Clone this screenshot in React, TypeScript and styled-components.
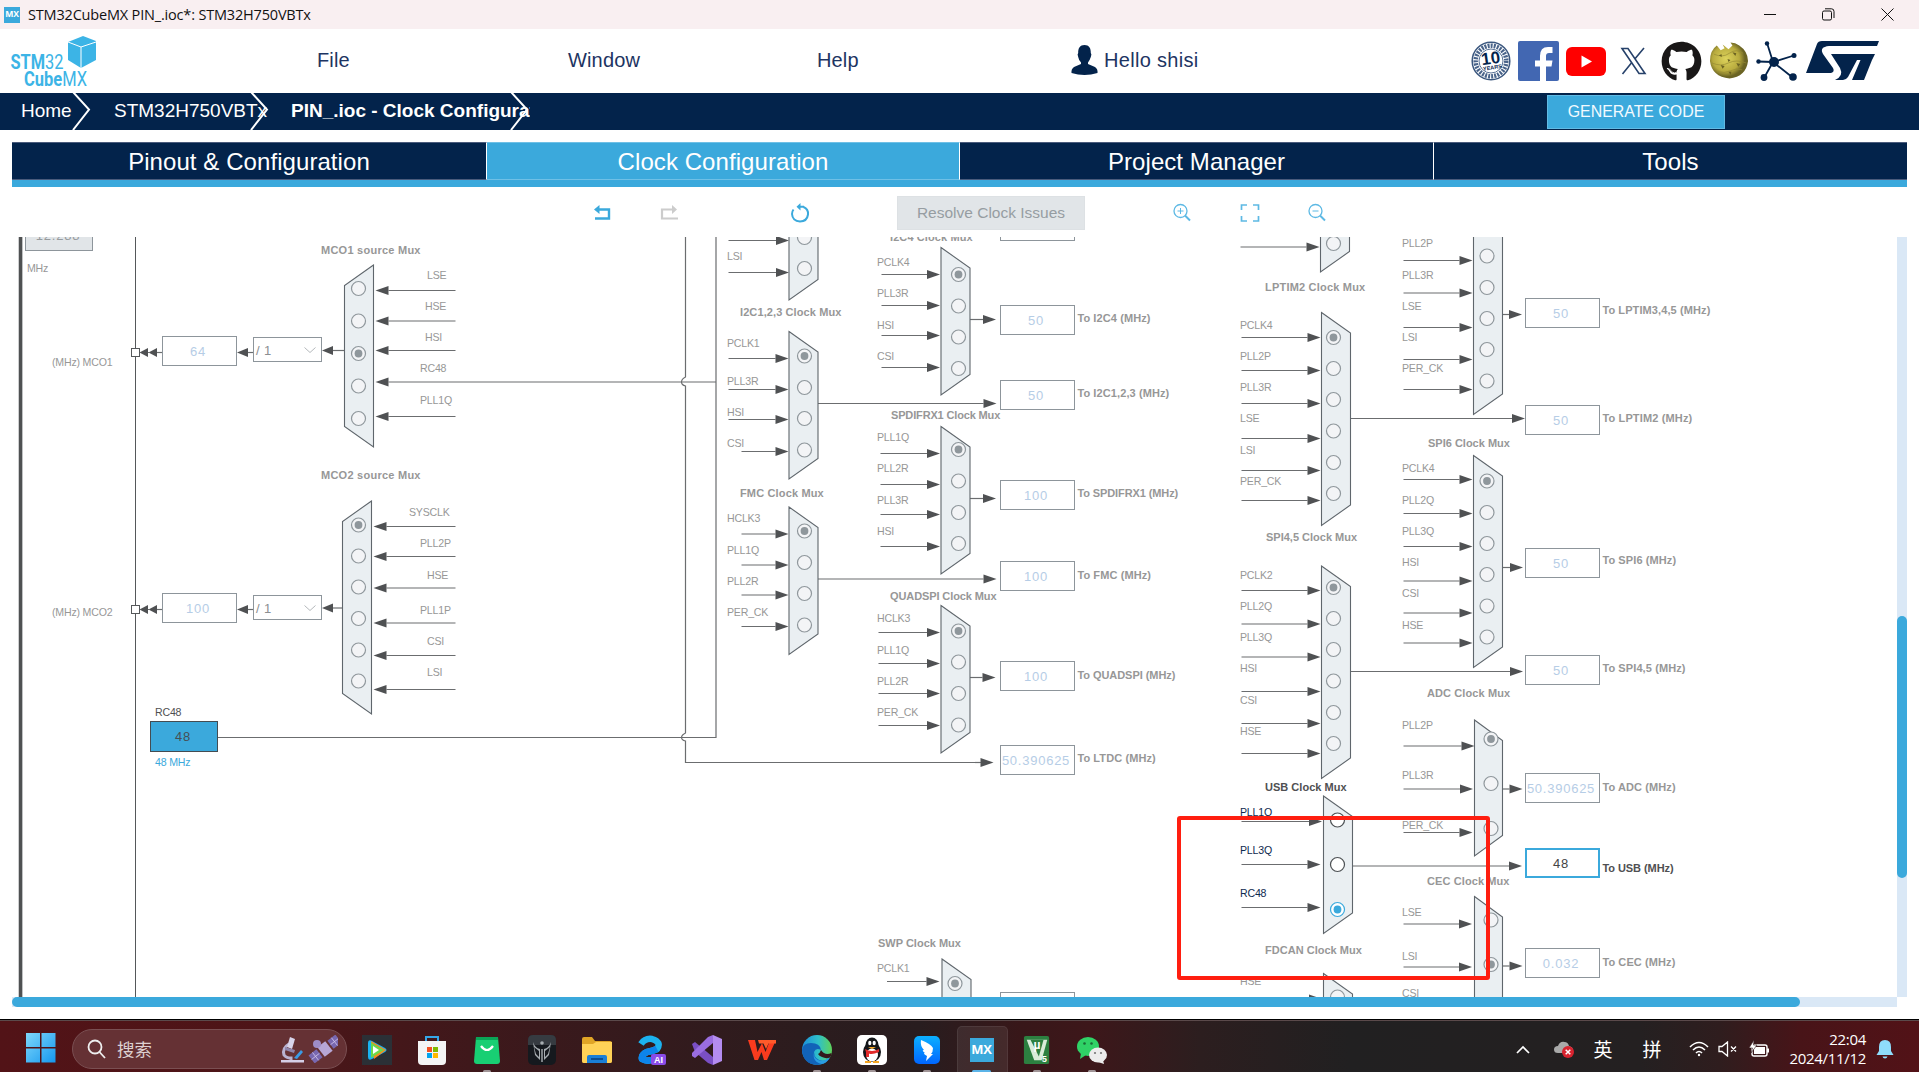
import React from 'react';
import styled, { createGlobalStyle } from 'styled-components';
import { FaGithub } from 'react-icons/fa';

const NAVY = '#03234b';
const SKY = '#3ba9dc';
const SANS = '"Liberation Sans", Arial, sans-serif';
const SYSTEM = '"Open Sans", "Noto Sans", "Noto Sans CJK SC", sans-serif';

const GlobalStyle = createGlobalStyle`
  * { box-sizing: border-box; }
  body { margin: 0; background: #fff; overflow: hidden; font-family: ${SANS}; }
`;

const Window = styled.div`
  width: 1919px;
  height: 1072px;
  display: flex;
  flex-direction: column;
  background: #fff;
  overflow: hidden;
`;

/* ---------- title bar ---------- */
const TitleBar = styled.div`
  height: 29px;
  flex: none;
  display: flex;
  align-items: center;
  padding: 0 25px 0 4px;
  background: #f9eff1;
`;
const AppBadge = styled.div<{ $size: number }>`
  width: ${p => p.$size}px;
  height: ${p => p.$size}px;
  display: flex;
  align-items: center;
  justify-content: center;
  background: ${SKY};
  color: #fff;
  font: bold ${p => p.$size * 0.54}px/1 "Open Sans", sans-serif;
  letter-spacing: -0.3px;
`;
const WindowTitle = styled.div`
  flex: 1;
  margin-left: 8px;
  font: 14.5px/20px ${SYSTEM};
  letter-spacing: -0.18px;
  color: #111;
`;
const WindowButtons = styled.div`
  display: flex;
  gap: 46px;
  align-items: center;
`;

/* ---------- header ---------- */
const Header = styled.header`
  height: 64px;
  flex: none;
  display: grid;
  grid-template-columns: 317px 251px 249px 254px 400px 1fr;
  align-items: center;
`;
const LogoCell = styled.div`
  height: 64px;
  padding: 5px 0 0 8px;
`;
const MenuItem = styled.div`
  font-size: 20px;
  line-height: 24px;
  padding-bottom: 3px;
  letter-spacing: 0.15px;
  color: #1d3462;
`;
const UserItem = styled(MenuItem)`
  display: flex;
  align-items: center;
  gap: 6px;
  padding-bottom: 2px;
  letter-spacing: 0.3px;
`;
const Links = styled.div`
  display: flex;
  align-items: center;
  gap: 7px;
`;
const LinkIcon = styled.div<{ $w?: number }>`
  width: ${p => p.$w ?? 41}px;
  height: 40px;
  display: flex;
  align-items: center;
  justify-content: center;
`;

/* ---------- breadcrumb ---------- */
const Crumbs = styled.nav`
  height: 37px;
  flex: none;
  display: flex;
  align-items: center;
  background: ${NAVY};
  color: #fff;
`;
const Crumb = styled.div<{ $w: number; $pad: number; $bold?: boolean }>`
  position: relative;
  width: ${p => p.$w}px;
  height: 37px;
  padding-left: ${p => p.$pad}px;
  overflow: hidden;
  white-space: nowrap;
  font-size: 19px;
  line-height: 36px;
  font-weight: ${p => (p.$bold ? 700 : 400)};
`;
const CrumbArrow = styled.svg<{ $x: number }>`
  position: absolute;
  left: ${p => p.$x}px;
  top: 0;
`;
const Generate = styled.button`
  width: 178px;
  height: 34px;
  margin-left: 1017px;
  padding: 1px 0 0;
  border: 1px solid #62bae3;
  background: ${SKY};
  color: #f2faff;
  font: 15.9px/20px ${SANS};
`;

/* ---------- tabs ---------- */
const Tabs = styled.div`
  height: 45px;
  flex: none;
  margin: 12px 12px 0;
  display: grid;
  grid-template-columns: 475px 473px 474px 1fr;
  border-bottom: 7px solid ${SKY};
`;
const Tab = styled.div<{ $active?: boolean }>`
  display: flex;
  align-items: center;
  justify-content: center;
  padding-top: 2px;
  background: ${p => (p.$active ? SKY : NAVY)};
  border: 1px solid ${p => (p.$active ? '#6fc0e6' : '#4a5b7c')};
  border-right-color: #fff;
  border-left-width: 0;
  color: #fff;
  font-size: 24px;
  letter-spacing: 0.07px;
  &:last-child { border-right-width: 0; }
`;

/* ---------- toolbar ---------- */
const Toolbar = styled.div`
  height: 50px;
  flex: none;
  display: flex;
  align-items: center;
  padding: 1px 0 0 592px;
`;
const Tool = styled.div<{ $gap: number }>`
  width: 20px;
  height: 20px;
  margin-right: ${p => p.$gap}px;
  svg { display: block; }
`;
const Resolve = styled.button`
  width: 188px;
  height: 34px;
  margin-right: 87px;
  padding: 1px 0 0;
  border: 1px solid #dde1e4;
  background: #e1e5e8;
  color: #969da2;
  font: 15.5px/20px ${SANS};
`;

/* ---------- diagram ---------- */
const Workspace = styled.main`
  height: 770px;
  flex: none;
  display: grid;
  grid-template: 760px 10px / 1885px 10px;
  padding-left: 12px;
`;
const Viewport = styled.div`
  position: relative;
  overflow: hidden;
`;
const Board = styled.div`
  position: absolute;
  left: -12px;
  top: -237px;
  width: 1919px;
  height: 1072px;
`;
const Drawing = styled.svg`
  position: absolute;
  left: 0;
  top: 0;
`;
const TONES = { dim: '#979797', dark: '#4f5052', navy: '#0e2a4f', sky: SKY };
type Tone = keyof typeof TONES;
const Pin = styled.span<{ $x: number; $base: number; $tone?: Tone }>`
  position: absolute;
  left: ${p => p.$x}px;
  top: ${p => p.$base - 10}px;
  white-space: nowrap;
  font-size: 10.6px;
  line-height: 12px;
  letter-spacing: -0.2px;
  color: ${p => TONES[p.$tone ?? 'dim']};
`;
const Caption = styled(Pin)<{ $track?: number }>`
  font-size: 11px;
  font-weight: 700;
  letter-spacing: ${p => p.$track ?? 0.1}px;
`;
const Field = styled.div<{ $x: number; $y: number; $on?: boolean }>`
  position: absolute;
  left: ${p => p.$x}px;
  top: ${p => p.$y}px;
  width: 75px;
  height: 30px;
  padding: 1px 3px 0 0;
  display: flex;
  align-items: center;
  justify-content: center;
  background: #fff;
  border: ${p => (p.$on ? `2px solid ${SKY}` : '1px solid #8d959b')};
  color: ${p => (p.$on ? '#444' : '#b6cde6')};
  font-size: 13px;
  line-height: 16px;
  letter-spacing: 0.75px;
`;
const Source = styled(Field)<{ $solid?: boolean }>`
  width: 68px;
  height: 31px;
  padding: 0 2px 0 0;
  background: ${p => (p.$solid ? SKY : '#e1e5e8')};
  border-color: ${p => (p.$solid ? '#444c52' : '#8d959b')};
  color: ${p => (p.$solid ? '#474f55' : '#979b9e')};
`;
const Divider = styled.div<{ $x: number; $y: number }>`
  position: absolute;
  left: ${p => p.$x}px;
  top: ${p => p.$y}px;
  width: 69px;
  height: 25px;
  display: flex;
  align-items: center;
  justify-content: space-between;
  padding: 1px 5px 0 2px;
  background: #fff;
  border: 1px solid #8d959b;
  color: #8b8f92;
  font-size: 13px;
  letter-spacing: 0.4px;
`;
const Marker = styled.div`
  position: absolute;
  left: 1177px;
  top: 816px;
  width: 313px;
  height: 164px;
  border: 4px solid #ff1e10;
  border-radius: 3px;
`;
const Track = styled.div`
  position: relative;
  background: #dae8f6;
`;
const VThumb = styled.div`
  margin-top: 379px;
  height: 262px;
  border-radius: 5px;
  background: ${SKY};
`;
const HThumb = styled.div`
  width: 1788px;
  height: 10px;
  border-radius: 5px;
  background: ${SKY};
`;

/* ---------- taskbar ---------- */
const Taskbar = styled.footer`
  height: 53px;
  flex: none;
  margin-top: 12px;
  display: flex;
  align-items: center;
  border-top: 1px solid #000;
  box-shadow: inset 0 1px 0 #5b4a4b;
  background: linear-gradient(90deg, #521317 0, #4d1518 270px, #3a191c 540px, #2c1c1e 800px, #281d1f 920px,
    #381719 1020px, #3d171a 1090px, #2c1e1f 1200px, #212021 1350px, #242021 1640px, #2f1d1e 1720px, #481418 1800px, #521217 1919px);
`;
const StartCell = styled.div`
  width: 72px;
  padding: 8px 0 0 26px;
`;
const SearchBox = styled.div`
  width: 275px;
  height: 40px;
  margin-top: 5px;
  display: flex;
  align-items: center;
  padding: 0 8px 0 14px;
  border-radius: 20px;
  border: 1px solid #7a4f52;
  background: #653134;
  color: #ddd0d1;
  font: 17.5px/24px "Noto Sans CJK SC", sans-serif;
`;
const SearchText = styled.div`
  flex: 1;
  padding-left: 11px;
`;
const Apps = styled.div`
  display: flex;
  margin-left: 2px;
`;
const AppButton = styled.div<{ $mark?: 'dot' | 'active' }>`
  position: relative;
  width: 55px;
  height: 52px;
  display: flex;
  align-items: center;
  justify-content: center;
  padding-top: 7px;
  ${p => p.$mark === 'active' && `
    &::before { content: ''; position: absolute; left: 3px; top: 6px; width: 49px; height: 60px;
      border-radius: 5px; background: #ffffff14; border: 1px solid #ffffff12; }
  `}
  ${p => p.$mark && `
    &::after { content: ''; position: absolute; bottom: -1px; height: 3px; border-radius: 2px;
      width: ${p.$mark === 'active' ? 19 : 8}px; background: ${p.$mark === 'active' ? '#5bb4e8' : '#a09496'}; }
  `}
  svg, div { position: relative; }
`;
const Tray = styled.div`
  flex: 1;
  height: 52px;
  display: flex;
  align-items: center;
  justify-content: flex-end;
  padding: 6px 25px 0 0;
  color: #fff;
`;
const TrayItem = styled.div<{ $mr: number }>`
  margin-right: ${p => p.$mr}px;
  display: flex;
  font: 19px/24px "Noto Sans CJK SC", sans-serif;
`;
const Clock = styled.div`
  margin-right: 10px;
  text-align: right;
  font: 15px/19px ${SYSTEM};
  letter-spacing: -0.32px;
`;

/* ---------- diagram data ---------- */
type Mux = {
  x: number; top: number; bottom: number; w?: number;
  cx: number; dots: number[]; sel?: number; live?: boolean;
  title?: [string, number, number, number?];
  pinX: number; pins: [string, number, number?][];
  from: number; tip: number; wires: [number, number?, number?][];
  out?: [number, number];
};

const MUXES: Mux[] = [
  { x: 373.5, w: -29, top: 265, bottom: 447, cx: 358.5, dots: [288.5, 321, 353.5, 386, 418.5], sel: 2,
    title: ['MCO1 source Mux', 321, 254, 0.25], pinX: 0,
    pins: [['LSE', 279, 427], ['HSE', 310, 425], ['HSI', 341, 425], ['RC48', 372, 420], ['PLL1Q', 404, 420]],
    from: 455.5, tip: 375.5, wires: [[290.5], [321], [350.5], [382, 375.5, 716], [416.5]] },
  { x: 371.5, w: -29, top: 501, bottom: 714, cx: 358.5, dots: [525, 556, 587, 618.5, 650, 681], sel: 0,
    title: ['MCO2 source Mux', 321, 479, 0.25], pinX: 0,
    pins: [['SYSCLK', 516, 409], ['PLL2P', 547, 420], ['HSE', 579, 427], ['PLL1P', 614, 420], ['CSI', 645, 427], ['LSI', 676, 427]],
    from: 455.5, tip: 373.5, wires: [[526.5], [556.5], [588], [623], [655.5], [689.5]] },
  { x: 789, top: 200, bottom: 300, cx: 804.5, dots: [237.5, 268.5], pinX: 727, pins: [['LSI', 260]],
    from: 728.5, tip: 789, wires: [[240.5], [272.5]] },
  { x: 789, top: 331.5, bottom: 479, cx: 804.5, dots: [356, 387.5, 418.5, 450], sel: 0,
    title: ['I2C1,2,3 Clock Mux', 740, 316], pinX: 727,
    pins: [['PCLK1', 347], ['PLL3R', 385], ['HSI', 416], ['CSI', 447]],
    from: 728.5, tip: 788.5, wires: [[358.5], [389.5], [419.5], [451.5, 788.5, 741.5]], out: [403.5, 996.5] },
  { x: 789, top: 507, bottom: 654.5, cx: 804.5, dots: [531, 562.5, 593.5, 625], sel: 0,
    title: ['FMC Clock Mux', 740, 497, 0.15], pinX: 727,
    pins: [['HCLK3', 522], ['PLL1Q', 554], ['PLL2R', 585], ['PER_CK', 616]],
    from: 741.5, tip: 788.5, wires: [[534], [565], [595], [626.5]], out: [579, 996.5] },
  { x: 941, top: 247.5, bottom: 395, cx: 958.5, dots: [274.5, 306, 337, 368.5], sel: 0,
    title: ['I2C4 Clock Mux', 890, 241], pinX: 877,
    pins: [['PCLK4', 266], ['PLL3R', 297], ['HSI', 329], ['CSI', 360]],
    from: 881.5, tip: 940, wires: [[274.5], [305.5], [335.5], [367.5]], out: [319.5, 996] },
  { x: 941, top: 426.5, bottom: 574, cx: 958.5, dots: [449.5, 481, 512.5, 543.5], sel: 0,
    title: ['SPDIFRX1 Clock Mux', 891, 419, -0.15], pinX: 877,
    pins: [['PLL1Q', 441], ['PLL2R', 472], ['PLL3R', 504], ['HSI', 535]],
    from: 880.5, tip: 940, wires: [[453.5], [484.5], [514.5], [546.5]], out: [498.5, 996] },
  { x: 941, top: 605.5, bottom: 753, cx: 958.5, dots: [631, 662, 693.5, 725], sel: 0,
    title: ['QUADSPI Clock Mux', 890, 600, -0.1], pinX: 877,
    pins: [['HCLK3', 622], ['PLL1Q', 654], ['PLL2R', 685], ['PER_CK', 716]],
    from: 878.5, tip: 940, wires: [[632.5], [663.5], [693.5], [725.5]], out: [677.5, 995.5] },
  { x: 942, top: 959, bottom: 1100, cx: 955, dots: [983.5], sel: 0,
    title: ['SWP Clock Mux', 878, 947, 0], pinX: 877, pins: [['PCLK1', 972]],
    from: 887, tip: 939.5, wires: [[981.5]] },
  { x: 1320.5, top: 200, bottom: 272, cx: 1333.5, dots: [243.5], pinX: 1240, pins: [],
    from: 1240.5, tip: 1319.5, wires: [[247]] },
  { x: 1321.5, top: 312.5, bottom: 525.5, cx: 1333.5, dots: [337.5, 368.5, 399.5, 431, 462.5, 493.5], sel: 0,
    title: ['LPTIM2 Clock Mux', 1265, 291, 0.2], pinX: 1240,
    pins: [['PCLK4', 329], ['PLL2P', 360], ['PLL3R', 391], ['LSE', 422], ['LSI', 454], ['PER_CK', 485]],
    from: 1241.5, tip: 1320.5, wires: [[337.5], [370.5], [403.5], [438.5], [470.5], [500.5]], out: [418.5, 1525] },
  { x: 1321.5, top: 566, bottom: 778.5, cx: 1333.5, dots: [587.5, 618.5, 649.5, 681, 712.5, 743.5], sel: 0,
    title: ['SPI4,5 Clock Mux', 1266, 541, 0], pinX: 1240,
    pins: [['PCLK2', 579], ['PLL2Q', 610], ['PLL3Q', 641], ['HSI', 672], ['CSI', 704], ['HSE', 735]],
    from: 1241.5, tip: 1320.5, wires: [[590.5], [624], [657], [691.5], [723.5], [753.5]], out: [671.5, 1523] },
  { x: 1473.5, top: 180, bottom: 414.5, cx: 1487, dots: [256, 287.5, 318.5, 349.5, 381], pinX: 1402,
    pins: [['PLL2P', 247], ['PLL3R', 279], ['LSE', 310], ['LSI', 341], ['PER_CK', 372]],
    from: 1403.5, tip: 1472.5, wires: [[260.5], [293], [327.5], [359.5], [389.5]], out: [314.5, 1522] },
  { x: 1473.5, top: 455.5, bottom: 667.5, cx: 1487, dots: [481, 512.5, 543.5, 574.5, 606, 637], sel: 0,
    title: ['SPI6 Clock Mux', 1428, 447, 0], pinX: 1402,
    pins: [['PCLK4', 472], ['PLL2Q', 504], ['PLL3Q', 535], ['HSI', 566], ['CSI', 597], ['HSE', 629]],
    from: 1403.5, tip: 1472.5, wires: [[479.5], [513.5], [546.5], [581], [613], [643]], out: [567.5, 1523] },
  { x: 1474.5, w: 28, top: 720, bottom: 856, cx: 1491, dots: [739, 783.5, 828.5], sel: 0,
    title: ['ADC Clock Mux', 1427, 697], pinX: 1402,
    pins: [['PLL2P', 729], ['PLL3R', 779], ['PER_CK', 829]],
    from: 1403.5, tip: 1472.5, wires: [[746, 1474.5], [789, 1473], [832.5]], out: [789, 1522.5] },
  { x: 1323.5, top: 796, bottom: 933.5, cx: 1337.5, dots: [820, 864.5, 909.5], sel: 2, live: true,
    title: ['USB Clock Mux', 1265, 791, 0.02], pinX: 1240,
    pins: [['PLL1Q', 816], ['PLL3Q', 854], ['RC48', 897]],
    from: 1241.5, tip: 1320.5, wires: [[821.5, 1322], [864.5], [907.5]], out: [866, 1522] },
  { x: 1474.5, w: 28, top: 896.5, bottom: 1100, cx: 1491, dots: [920, 964.5], sel: 1,
    title: ['CEC Clock Mux', 1427, 885], pinX: 1402,
    pins: [['LSE', 916], ['LSI', 960], ['CSI', 997]],
    from: 1403.5, tip: 1472, wires: [[924], [967]], out: [966, 1522.5] },
  { x: 1323.5, top: 973.5, bottom: 1100, cx: 1337.5, dots: [997],
    title: ['FDCAN Clock Mux', 1265, 954, 0.02], pinX: 1240, pins: [['HSE', 985]],
    from: 1241.5, tip: 1322, wires: [[999]] },
];

type Output = { value: string; label?: string; x: number; y: number; base?: number; on?: boolean; track?: number };
const OUTPUTS: Output[] = [
  { value: '', x: 1000, y: 211 },
  { value: '50', label: 'To I2C4 (MHz)', x: 1000, y: 305, base: 322 },
  { value: '50', label: 'To I2C1,2,3 (MHz)', x: 1000, y: 380, base: 397 },
  { value: '100', label: 'To SPDIFRX1 (MHz)', x: 1000, y: 480, base: 497, track: -0.1 },
  { value: '100', label: 'To FMC (MHz)', x: 1000, y: 561, base: 579 },
  { value: '100', label: 'To QUADSPI (MHz)', x: 1000, y: 661, base: 679, track: -0.05 },
  { value: '50.390625', label: 'To LTDC (MHz)', x: 1000, y: 745, base: 762 },
  { value: '', x: 1000, y: 992 },
  { value: '50', label: 'To LPTIM3,4,5 (MHz)', x: 1525, y: 298, base: 314 },
  { value: '50', label: 'To LPTIM2 (MHz)', x: 1525, y: 405, base: 422, track: 0.15 },
  { value: '50', label: 'To SPI6 (MHz)', x: 1525, y: 548, base: 564 },
  { value: '50', label: 'To SPI4,5 (MHz)', x: 1525, y: 655, base: 672 },
  { value: '50.390625', label: 'To ADC (MHz)', x: 1525, y: 773, base: 791 },
  { value: '48', label: 'To USB (MHz)', x: 1525, y: 848, base: 872, on: true, track: -0.05 },
  { value: '0.032', label: 'To CEC (MHz)', x: 1525, y: 948, base: 966 },
];

const WIRE = '#6b6d6f';

function Arrow({ x1, x2, y, head = 13 }: { x1: number; x2: number; y: number; head?: number }) {
  const d = x2 > x1 ? -1 : 1;
  return (
    <g>
      <line x1={x1} x2={x2 + d * head} y1={y} y2={y} stroke={WIRE} strokeWidth={1.2} />
      <polygon points={`${x2},${y} ${x2 + d * head},${y - 4.6} ${x2 + d * head},${y + 4.6}`} fill="#4f5153" />
    </g>
  );
}

function MuxShape({ m }: { m: Mux }) {
  const w = m.w ?? 29;
  const r = m.x + w;
  return (
    <g>
      {m.out && <Arrow x1={r} x2={m.out[1]} y={m.out[0]} />}
      {m.wires.map(([y, tip, from]) => <Arrow key={y} x1={from ?? m.from} x2={tip ?? m.tip} y={y} />)}
      <polygon
        points={`${m.x},${m.top} ${r},${m.top + 20.5} ${r},${m.bottom - 20.5} ${m.x},${m.bottom}`}
        fill="#eaeff2" stroke="#5f666c" strokeWidth={1.1}
      />
      {m.dots.map((y, i) => {
        const on = i === m.sel;
        const color = m.live ? (on ? SKY : '#4c5053') : '#8f979c';
        return (
          <g key={y}>
            <circle cx={m.cx} cy={y} r={7} fill={m.live ? '#fff' : '#f3f4f6'} stroke={color} strokeWidth={1.2} />
            {on && <circle cx={m.cx} cy={y} r={3.9} fill={color} />}
          </g>
        );
      })}
    </g>
  );
}

function ClockTree() {
  return (
    <Board>
      <Drawing width={1919} height={1072}>
        <rect x={18.3} y={200} width={4.6} height={820} fill="#b9bbbc" />
        <rect x={19} y={200} width={3} height={820} fill="#4f5152" />
        <path d="M135.5 200V1020" stroke="#55585a" fill="none" />
        <path d="M218 737.5H716V200" stroke={WIRE} strokeWidth={1.2} fill="none" />
        <path d="M685.5 200V377Q681.5 379 681.5 382T685.5 386V733Q681.5 735 681.5 737.5T685.5 741V762.5H985" stroke={WIRE} strokeWidth={1.2} fill="none" />
        <Arrow x1={975} x2={993.5} y={762.5} />
        {[[352.5, 350.5], [609.5, 608]].map(([y, y2]) => (
          <g key={y}>
            <Arrow x1={253} x2={237} y={y} head={11} />
            <Arrow x1={344} x2={322} y={y2} head={11} />
            <Arrow x1={162} x2={148.5} y={y} head={8.5} />
            <Arrow x1={150} x2={139.5} y={y} head={8.5} />
            <rect x={131.5} y={y - 4} width={8} height={8} fill="#fff" stroke="#55585a" />
          </g>
        ))}
        {MUXES.map((m, i) => <MuxShape key={i} m={m} />)}
      </Drawing>
      {MUXES.map((m, i) => (
        <React.Fragment key={i}>
          {m.title && (
            <Caption $x={m.title[1]} $base={m.title[2]} $track={m.title[3]} $tone={m.live ? 'dark' : 'dim'}>{m.title[0]}</Caption>
          )}
          {m.pins.map(([text, base, x]) => (
            <Pin key={text} $x={x ?? m.pinX} $base={base} $tone={m.live ? 'navy' : 'dim'}>{text}</Pin>
          ))}
        </React.Fragment>
      ))}
      {OUTPUTS.map(o => (
        <React.Fragment key={`${o.x}-${o.y}`}>
          <Field $x={o.x} $y={o.y} $on={o.on}>{o.value}</Field>
          {o.label && (
            <Caption $x={o.x + 77.4} $base={o.base ?? 0} $track={o.track} $tone={o.on ? 'dark' : 'dim'}>{o.label}</Caption>
          )}
        </React.Fragment>
      ))}
      <Source $x={25} $y={220}>12.288</Source>
      <Pin $x={27} $base={272}>MHz</Pin>
      <Pin $x={52} $base={366}>(MHz) MCO1</Pin>
      <Pin $x={52} $base={616}>(MHz) MCO2</Pin>
      <Field $x={162} $y={336}>64</Field>
      <Field $x={162} $y={593}>100</Field>
      {[337, 595].map(y => (
        <Divider key={y} $x={253} $y={y}>
          / 1
          <svg width={12} height={7}><path d="M.5 .5L6 5.5L11.5 .5" fill="none" stroke="#b4b8bb" /></svg>
        </Divider>
      ))}
      <Pin $x={155} $base={716} $tone="dark">RC48</Pin>
      <Source $x={150} $y={721} $solid>48</Source>
      <Pin $x={155} $base={766} $tone="sky">48 MHz</Pin>
      <Marker />
    </Board>
  );
}

/* ---------- drawings ---------- */
const CubeLogo = () => (
  <svg width={92} height={56} viewBox="0 0 92 56">
    <g fill="#3cb4e6">
      <path d="M75 2L88 7V26L73 34L60 26V8Z" />
      <path d="M60 8L73 13L88 8M73 13V34" stroke="#fff" strokeWidth={1} fill="none" />
      <g fontFamily="Roboto, sans-serif" fontSize={20}>
        <text x={2.5} y={34.5} textLength={53} lengthAdjust="spacingAndGlyphs"><tspan fontWeight={700}>STM</tspan>32</text>
        <text x={16} y={52.3} textLength={63} lengthAdjust="spacingAndGlyphs"><tspan fontWeight={700}>Cube</tspan>MX</text>
      </g>
    </g>
  </svg>
);

const Anniversary = () => (
  <svg width={40} height={40} viewBox="0 0 40 40">
    <circle cx={20} cy={20} r={18.8} fill="#fff" stroke="#3c587f" strokeWidth={1.5} />
    <circle cx={20} cy={20} r={15.3} fill="none" stroke="#4a648a" strokeWidth={4.5} strokeDasharray="2 1.1" />
    <circle cx={20} cy={20} r={12} fill="#fff" stroke="#5b7396" />
    <g transform="rotate(-8 20 20)" fill={NAVY} fontFamily="Liberation Sans, sans-serif" fontWeight={700} textAnchor="middle">
      <text x={20} y={23} fontSize={17}>10</text>
      <text x={20.5} y={28.5} fontSize={5.5}>YEARS</text>
    </g>
  </svg>
);

const XLogo = () => (
  <svg width={27} height={28} viewBox="0 0 27 28" fill="none" stroke="#26416a" strokeWidth={1.6}>
    <path d="M2 1.5H8L25 26.500H19Z" />
    <path d="M24 1L15 11.800M11.800 15.600L2.500 27" />
  </svg>
);

const Globe = () => (
  <svg width={41} height={40} viewBox="0 0 41 40">
    <defs>
      <radialGradient id="globe" cx=".42" cy=".45">
        <stop offset="0" stopColor="#ddd35c" /><stop offset=".7" stopColor="#b8ab3e" /><stop offset="1" stopColor="#6b6424" />
      </radialGradient>
    </defs>
    <path d="M8 4L12 9L16 7L14 3L20 8L24 4L22 1Q27 1 31 4Q40 10 40 20Q38 36 21 38Q3 36 1 20Q1 9 8 4Z" fill="url(#globe)" />
    <path d="M5 13Q14 17 21 12T35 12M3 22Q12 26 20 22T38 22M8 31Q16 33 22 30T34 29" stroke="#968b34" strokeWidth={0.7} fill="none" />
    <path d="M10 14l3-1v3zM24 11l4 1-1 3zM12 24l4 1-2 3zM28 22l4 1-2 3zM20 31l3 0-1 3zM19 18l3 1-2 2z" fill="#6a6122" />
  </svg>
);

const Community = () => (
  <svg width={41} height={40} viewBox="0 0 41 40">
    <path d="M17 21L11 2M17 21L38 14.5M17 21L2 20.5M17 21L8 37M17 21L36 36" stroke={NAVY} strokeWidth={1.8} />
    <g fill={NAVY}>
      <circle cx={18} cy={21} r={5} /><circle cx={11} cy={2.5} r={2.2} /><circle cx={38} cy={14.5} r={2.5} />
      <circle cx={2.5} cy={20.5} r={2.2} /><circle cx={8} cy={36.5} r={3.4} /><circle cx={37} cy={36} r={3.8} />
    </g>
  </svg>
);

const STLogo = () => (
  <svg width={73} height={40} viewBox="0 0 73 40">
    <path d="M11 3Q12 0 16 0H73L71 5H23Q13 6 17 13L27 27Q29 31 25 32H0Z" fill={NAVY} />
    <path d="M25 13H69L66 19L58 39H46L54.5 19H51L42 36Q40 39 37 39H29Q38 35 34 27Z" fill={NAVY} />
  </svg>
);

const Person = () => (
  <svg width={27} height={30} viewBox="0 0 27 30">
    <path d="M13.5 0C18 0 20 3 19.8 8Q21 9 19.8 12Q18.5 16 17 17.5V19L24 22Q27 24 26.5 28Q20 30 13.5 30T.5 28Q0 24 3 22L10 19V17.5Q8 16 7.2 12Q6 9 7.2 8C7 3 9 0 13.5 0Z" fill={NAVY} />
  </svg>
);

const chevron = (
  <path d="M1 -1L17 16.5L1 37" stroke="#fff" strokeWidth={2} fill="none" />
);

const AppIcon = ({ children, s = 30 }: { children: React.ReactNode; s?: number }) => (
  <svg width={s} height={s} viewBox="0 0 30 30">{children}</svg>
);

const APPS: { icon: React.ReactNode; mark?: 'dot' | 'active' }[] = [
  { icon: <AppIcon><rect width={30} height={30} fill="#2b3036" /><path d="M6 8Q6 4 10 6L23 13Q26 15 23 17L10 24Q6 26 6 22Z" fill="#19b4f2" /><path d="M9 6L24 15L12 24Z" fill="#f98a1c" /><path d="M9 7.500L22 15L9 23Z" fill="#6cd84c" /><path d="M11 11L17 15L11 19Z" fill="#fff" /></AppIcon> },
  { icon: <AppIcon><path d="M9 7V2H21V7" fill="none" stroke="#35a7e8" strokeWidth={2} /><path d="M1 6H29V26Q29 30 25 30H5Q1 30 1 26Z" fill="#f4f4f4" /><path d="M10 12h5v5h-5z" fill="#f25022" /><path d="M16 12h5v5h-5z" fill="#7fba00" /><path d="M10 18h5v5h-5z" fill="#00a4ef" /><path d="M16 18h5v5h-5z" fill="#ffb900" /></AppIcon> },
  { icon: <AppIcon><path d="M4 2H26L28 26Q28 29 25 29H5Q2 29 2 26Z" fill="#18cf73" /><path d="M4 2H26V5H4Z" fill="#0aa557" /><path d="M9 11Q15 19 21 11" stroke="#fff" strokeWidth={2.2} fill="none" /></AppIcon>, mark: 'dot' },
  { icon: <AppIcon><rect x={1} width={28} height={30} rx={5} fill="#15191e" /><path d="M1 5Q1 0 6 0H24Q29 0 29 5V10H1Z" fill="#363b41" /><path d="M6 7Q8 13 13 14V25L8 20ZM24 7Q22 13 17 14V25L22 20ZM14.300 14H15.700V27H14.300Z" fill="#a8aeb2" /><path d="M7 12L12 16V22L9 19ZM23 12L18 16V22L21 19Z" fill="#15191e" /><circle cx={15} cy={8} r={1.8} fill="#a8aeb2" /></AppIcon> },
  { icon: <AppIcon><path d="M0 4Q0 2 2 2H10L13 6H28Q30 6 30 8V26Q30 28 28 28H2Q0 28 0 26Z" fill="#e0a526" /><path d="M0 9H11L14 7H30V26Q30 28 28 28H2Q0 28 0 26Z" fill="#ffd257" /><path d="M5 28V22Q5 20 7 20H23Q25 20 25 22V28Z" fill="#1a7fd6" /><path d="M9 24H21" stroke="#0b4e92" strokeWidth={2} /></AppIcon> },
  { icon: <AppIcon><path d="M4 9Q8 3 15 4Q25 7 20 14Q16 16 10 17Q4 20 5 24Q12 28 20 22" stroke="#1cb2ef" strokeWidth={6.5} fill="none" strokeLinejoin="round" /><path d="M20 14Q16 16 10 17Q4 20 5 24Q12 28 20 22" stroke="#0d84ea" strokeWidth={6.5} fill="none" strokeLinejoin="round" /><rect x={14} y={19} width={15} height={11} rx={2} fill="#8a4be8" /><text x={21.5} y={28} fontSize={9} fontWeight={700} fill="#fff" textAnchor="middle" fontFamily="Liberation Sans, sans-serif">AI</text></AppIcon> },
  { icon: <AppIcon><path d="M0 9L3 7L21 22V30L16 28L3 17Z" fill="#7a4fc4" /><path d="M0 21L3 23L21 8V0L16 2L0 18Z" fill="#9a6de0" /><path d="M21 0L30 4V26L21 30Z" fill="#b48cf0" /></AppIcon> },
  { icon: <AppIcon><path d="M1 5H8L10.500 17L15 8L18.500 17L23 5H29L20 25H17L14.500 17L11 25H7.500Z" fill="#fb3b1e" /><path d="M11 5H29V8.500H21.500L19 14L16.500 8.500H12Z" fill="#ff5a2a" /></AppIcon> },
  { icon: <AppIcon><defs><linearGradient id="edge" x1="0" y1=".3" x2="1" y2=".3"><stop offset="0" stopColor="#1b8fdc" /><stop offset=".55" stopColor="#2fc0c8" /><stop offset="1" stopColor="#5fd35a" /></linearGradient></defs><circle cx={15} cy={15} r={15} fill="url(#edge)" /><path d="M0 15Q1 8 9 8Q18 8 19 15Q14 12 12 17Q12 25 21 26Q25 26 28 23Q23 30 15 30Q1 29 0 15Z" fill="#1263b8" /><path d="M12 17Q11 22 16 25Q22 27 28 22Q25 28 20 29Q10 27 12 17Z" fill="#2a9de2" /><path d="M16 19Q18 18 19 15Q23 21 29.5 18Q30 20 28 22.500Q24 24 20 22Q17 21 16 19Z" fill="#33191c" /></AppIcon>, mark: 'dot' },
  { icon: <AppIcon><rect width={30} height={30} rx={5} fill="#fff" /><ellipse cx={15} cy={17} rx={9} ry={10} fill="#15171a" /><ellipse cx={15} cy={10} rx={6.5} ry={7.5} fill="#15171a" /><ellipse cx={15} cy={20} rx={6} ry={6.5} fill="#fff" /><ellipse cx={12.8} cy={8} rx={1.6} ry={2.2} fill="#fff" /><ellipse cx={17.2} cy={8} rx={1.6} ry={2.2} fill="#fff" /><path d="M11 12H19L15 14Z" fill="#f5a623" /><path d="M8 14Q15 18 22 14V17Q15 20 12 18.5V22H9V17Z" fill="#e22a2a" /><path d="M8 26H14V28H8ZM16 26H22V28H16Z" fill="#f5a623" /></AppIcon>, mark: 'dot' },
  { icon: <AppIcon><defs><linearGradient id="bird" x1="0" y1="0" x2="0" y2="1"><stop offset="0" stopColor="#0cb0ff" /><stop offset="1" stopColor="#0066ff" /></linearGradient></defs><rect x={2} y={1} width={26} height={28} rx={5} fill="url(#bird)" /><path d="M9 5Q19 9 21 13Q21 17 19 19H21L14 26L15 21Q10 18 13 18Q9 15 12 15Q8 11 9 5Z" fill="#fff" /></AppIcon>, mark: 'dot' },
  { icon: <AppBadge $size={24}>MX</AppBadge>, mark: 'active' },
  { icon: <AppIcon s={28}><rect x={1} width={27} height={30} rx={2} fill="#2c8040" /><path d="M4 4H26L20 26H12Z" fill="#d9ecd9" /><path d="M8 4H22L17 22Z" fill="#2c8040" /><text x={15} y={14} fontSize={13} fontWeight={700} fill="#fff" textAnchor="middle" fontFamily="Liberation Sans, sans-serif">µ</text><text x={23} y={28} fontSize={10} fontWeight={700} fill="#fff" textAnchor="middle" fontFamily="Liberation Sans, sans-serif">5</text></AppIcon>, mark: 'dot' },
  { icon: <AppIcon><ellipse cx={11} cy={11.5} rx={11} ry={9.5} fill="#2fd266" /><path d="M4 18L3 24L9 20Z" fill="#2fd266" /><ellipse cx={21} cy={20} rx={9} ry={7.5} fill="#ececec" /><path d="M26 25L27 29L21 27Z" fill="#ececec" /><g fill="#1a6b35"><circle cx={7.5} cy={8.5} r={1.3} /><circle cx={14.5} cy={8.5} r={1.3} /></g><g fill="#777"><circle cx={18} cy={18} r={1.1} /><circle cx={24} cy={18} r={1.1} /></g></AppIcon>, mark: 'dot' },
];

export default function App() {
  return (
    <Window>
      <GlobalStyle />
      <TitleBar>
        <AppBadge $size={16}>MX</AppBadge>
        <WindowTitle>STM32CubeMX PIN_.ioc*: STM32H750VBTx</WindowTitle>
        <WindowButtons>
          <svg width={12} height={12}><path d="M0 5.5H12" stroke="#111" /></svg>
          <svg width={13} height={13} fill="none" stroke="#111"><rect x={0.5} y={3} width={9} height={9} rx={1.5} /><path d="M3 .8H9.500Q12 .8 12 3.500V10" /></svg>
          <svg width={13} height={13} stroke="#111"><path d="M.5 .5L12.5 12.5M12.5 .5L.5 12.5" /></svg>
        </WindowButtons>
      </TitleBar>

      <Header>
        <LogoCell><CubeLogo /></LogoCell>
        <MenuItem>File</MenuItem>
        <MenuItem>Window</MenuItem>
        <MenuItem>Help</MenuItem>
        <UserItem><Person />Hello shisi</UserItem>
        <Links>
          <LinkIcon $w={40}><Anniversary /></LinkIcon>
          <LinkIcon>
            <svg width={41} height={40}><rect width={41} height={40} rx={2} fill="#4267b2" /><path d="M22 40V25.5H17V19.5H22V15Q22 6 30 6H34.5V12H31Q28 12 28 15V19.5H34.5L33.5 25.5H28V40Z" fill="#fff" /></svg>
          </LinkIcon>
          <LinkIcon $w={40}>
            <svg width={40} height={29}><rect width={40} height={29} rx={6} fill="#f00" /><path d="M15.5 8.5L26 14.5L15.5 20.5Z" fill="#fff" /></svg>
          </LinkIcon>
          <LinkIcon><XLogo /></LinkIcon>
          <LinkIcon><FaGithub size={41} color="#191717" /></LinkIcon>
          <LinkIcon $w={40}><Globe /></LinkIcon>
          <LinkIcon><Community /></LinkIcon>
          <LinkIcon $w={76}><STLogo /></LinkIcon>
        </Links>
      </Header>

      <Crumbs>
        <Crumb $w={92} $pad={21}>Home<CrumbArrow $x={72} width={20} height={37}>{chevron}</CrumbArrow></Crumb>
        <Crumb $w={178} $pad={22}>STM32H750VBTx<CrumbArrow $x={158} width={20} height={37}>{chevron}</CrumbArrow></Crumb>
        <Crumb $w={260} $pad={21} $bold>PIN_.ioc - Clock Configuration<CrumbArrow $x={240} width={20} height={37}>{chevron}</CrumbArrow></Crumb>
        <Generate>GENERATE CODE</Generate>
      </Crumbs>

      <Tabs>
        <Tab>Pinout &amp; Configuration</Tab>
        <Tab $active>Clock Configuration</Tab>
        <Tab>Project Manager</Tab>
        <Tab>Tools</Tab>
      </Tabs>

      <Toolbar>
        <Tool $gap={47}><svg width={20} height={20} fill="none"><path d="M3 15.5H17V6.5H5" stroke={SKY} strokeWidth={2.4} /><path d="M7.5 2V11L2 6.5Z" fill={SKY} /></svg></Tool>
        <Tool $gap={111}><svg width={20} height={20} fill="none"><path d="M19 15.5H3V6.5H15" stroke="#ccc" strokeWidth={2.2} /><path d="M13 2V11L18 6.5Z" fill="#ccc" /></svg></Tool>
        <Tool $gap={87}><svg width={20} height={20} fill="none"><path d="M13.5 4Q18.5 6 18 11.5Q17 18.5 10 18.5Q2.5 18 2 11Q2 8.5 3.5 6.5" stroke={SKY} strokeWidth={2} /><path d="M6.5 3.8L10.5 0V2.8H14V4.8H10.5V7.5Z" fill={SKY} /></svg></Tool>
        <Resolve>Resolve Clock Issues</Resolve>
        <Tool $gap={48}><svg width={20} height={20} fill="none" stroke="#5db9e4"><circle cx={8.5} cy={8} r={6.5} strokeWidth={1.3} /><path d="M13 12.500L18 17.500" strokeWidth={2} /><path d="M5.5 8H11.5M8.5 5V11" /></svg></Tool>
        <Tool $gap={47}><svg width={20} height={20} fill="none" stroke="#5db9e4" strokeWidth={1.7}><path d="M1.5 7V2H7M13 2H18.5V7M18.5 13V18H13M7 18H1.5V13" /></svg></Tool>
        <Tool $gap={0}><svg width={20} height={20} fill="none" stroke="#5db9e4"><circle cx={8.5} cy={8} r={6.5} strokeWidth={1.3} /><path d="M13 12.500L18 17.500" strokeWidth={2} /><path d="M5.5 8H11.5" /></svg></Tool>
      </Toolbar>

      <Workspace>
        <Viewport><ClockTree /></Viewport>
        <Track><VThumb /></Track>
        <Track><HThumb /></Track>
      </Workspace>

      <Taskbar>
        <StartCell>
          <svg width={30} height={30}>
            <defs><linearGradient id="win" x1="0" y1="0" x2="1" y2="1"><stop offset="0" stopColor="#7fd8fb" /><stop offset="1" stopColor="#1597ee" /></linearGradient></defs>
            <path d="M0 0H14V14H0ZM15.5 0H29.5V14H15.5ZM0 15.5H14V29.5H0ZM15.5 15.5H29.5V29.5H15.5Z" fill="url(#win)" />
          </svg>
        </StartCell>
        <SearchBox>
          <svg width={19} height={20} fill="none" stroke="#eee" strokeWidth={1.8}><circle cx={8} cy={8} r={6.5} /><path d="M12.5 13L18 19" /></svg>
          <SearchText>搜索</SearchText>
          <svg width={58} height={28} viewBox="0 0 58 28">
            <path d="M1 25H24V27.5H1Z" fill="#d5cfe6" />
            <path d="M9 9Q2 13 4 20Q6 23 11 23V25" stroke="#b9b2d0" strokeWidth={3} fill="none" />
            <path d="M10 2L15 4L12 14L7 12Z" fill="#d8d4ea" /><path d="M5 12L15 15L14 18L5 15Z" fill="#8f86ad" />
            <path d="M14 23L21 15L23 17L17 24Z" fill="#3a9be6" />
            <g transform="rotate(-38 45 14)"><rect x={40} y={8} width={10} height={12} fill="#b7a7d6" /><rect x={28} y={9} width={10} height={10} fill="#7868b0" /><rect x={52} y={9} width={10} height={10} fill="#7868b0" /><path d="M33 9V19M57 9V19M28 14H38M52 14H62" stroke="#cfc2ea" strokeWidth={0.8} /></g>
            <circle cx={37} cy={9} r={4} fill="#9d8cc6" />
          </svg>
        </SearchBox>
        <Apps>{APPS.map((a, i) => <AppButton key={i} $mark={a.mark}>{a.icon}</AppButton>)}</Apps>
        <Tray>
          <TrayItem $mr={24}><svg width={14} height={9} fill="none" stroke="#fff" strokeWidth={1.7}><path d="M1 8L7 2L13 8" /></svg></TrayItem>
          <TrayItem $mr={20}>
            <svg width={20} height={18}><path d="M4 13Q0 13 0 9.5Q0 6 4 6Q6 1 10.5 2Q14 2 15 6Q19 7 19 10Q19 13 16 13Z" fill="#a9a9a9" /><circle cx={14} cy={12} r={6} fill="#d8232f" /><path d="M11.7 9.7L16.3 14.3M16.3 9.700L11.7 14.3" stroke="#fff" strokeWidth={1.5} /></svg>
          </TrayItem>
          <TrayItem $mr={30}>英</TrayItem>
          <TrayItem $mr={27}>拼</TrayItem>
          <TrayItem $mr={9}><svg width={20} height={16} fill="none" stroke="#fff" strokeWidth={1.6}><path d="M1 6Q10 -3 19 6M4 9Q10 3 16 9M7 12Q10 9 13 12" /><circle cx={10} cy={14} r={1.2} fill="#fff" stroke="none" /></svg></TrayItem>
          <TrayItem $mr={11}><svg width={20} height={16} fill="none" stroke="#fff" strokeWidth={1.3}><path d="M1 5.5H4L9.5 1V15L4 10.5H1ZM13 5.5L18 10.5M18 5.5L13 10.5" /></svg></TrayItem>
          <TrayItem $mr={20}><svg width={21} height={18}><rect x={3} y={5} width={15} height={11} rx={2} fill="none" stroke="#fff" strokeWidth={1.4} /><rect x={5} y={7} width={11} height={7} fill="#fff" /><path d="M19 8.5V12.5" stroke="#fff" strokeWidth={2} /><path d="M5 0L0 8H3.5L2 13L8 5H4.5Z" fill="#fff" stroke="#33191c" strokeWidth={0.6} /></svg></TrayItem>
          <Clock>22:04<br />2024/11/12</Clock>
          <svg width={18} height={20}><path d="M9 1Q15 1 15 8V12L17.5 16H.5L3 12V8Q3 1 9 1ZM6.5 17.5H11.5Q11 19.5 9 19.5T6.5 17.5Z" fill="#8fdcfb" /></svg>
        </Tray>
      </Taskbar>
    </Window>
  );
}
